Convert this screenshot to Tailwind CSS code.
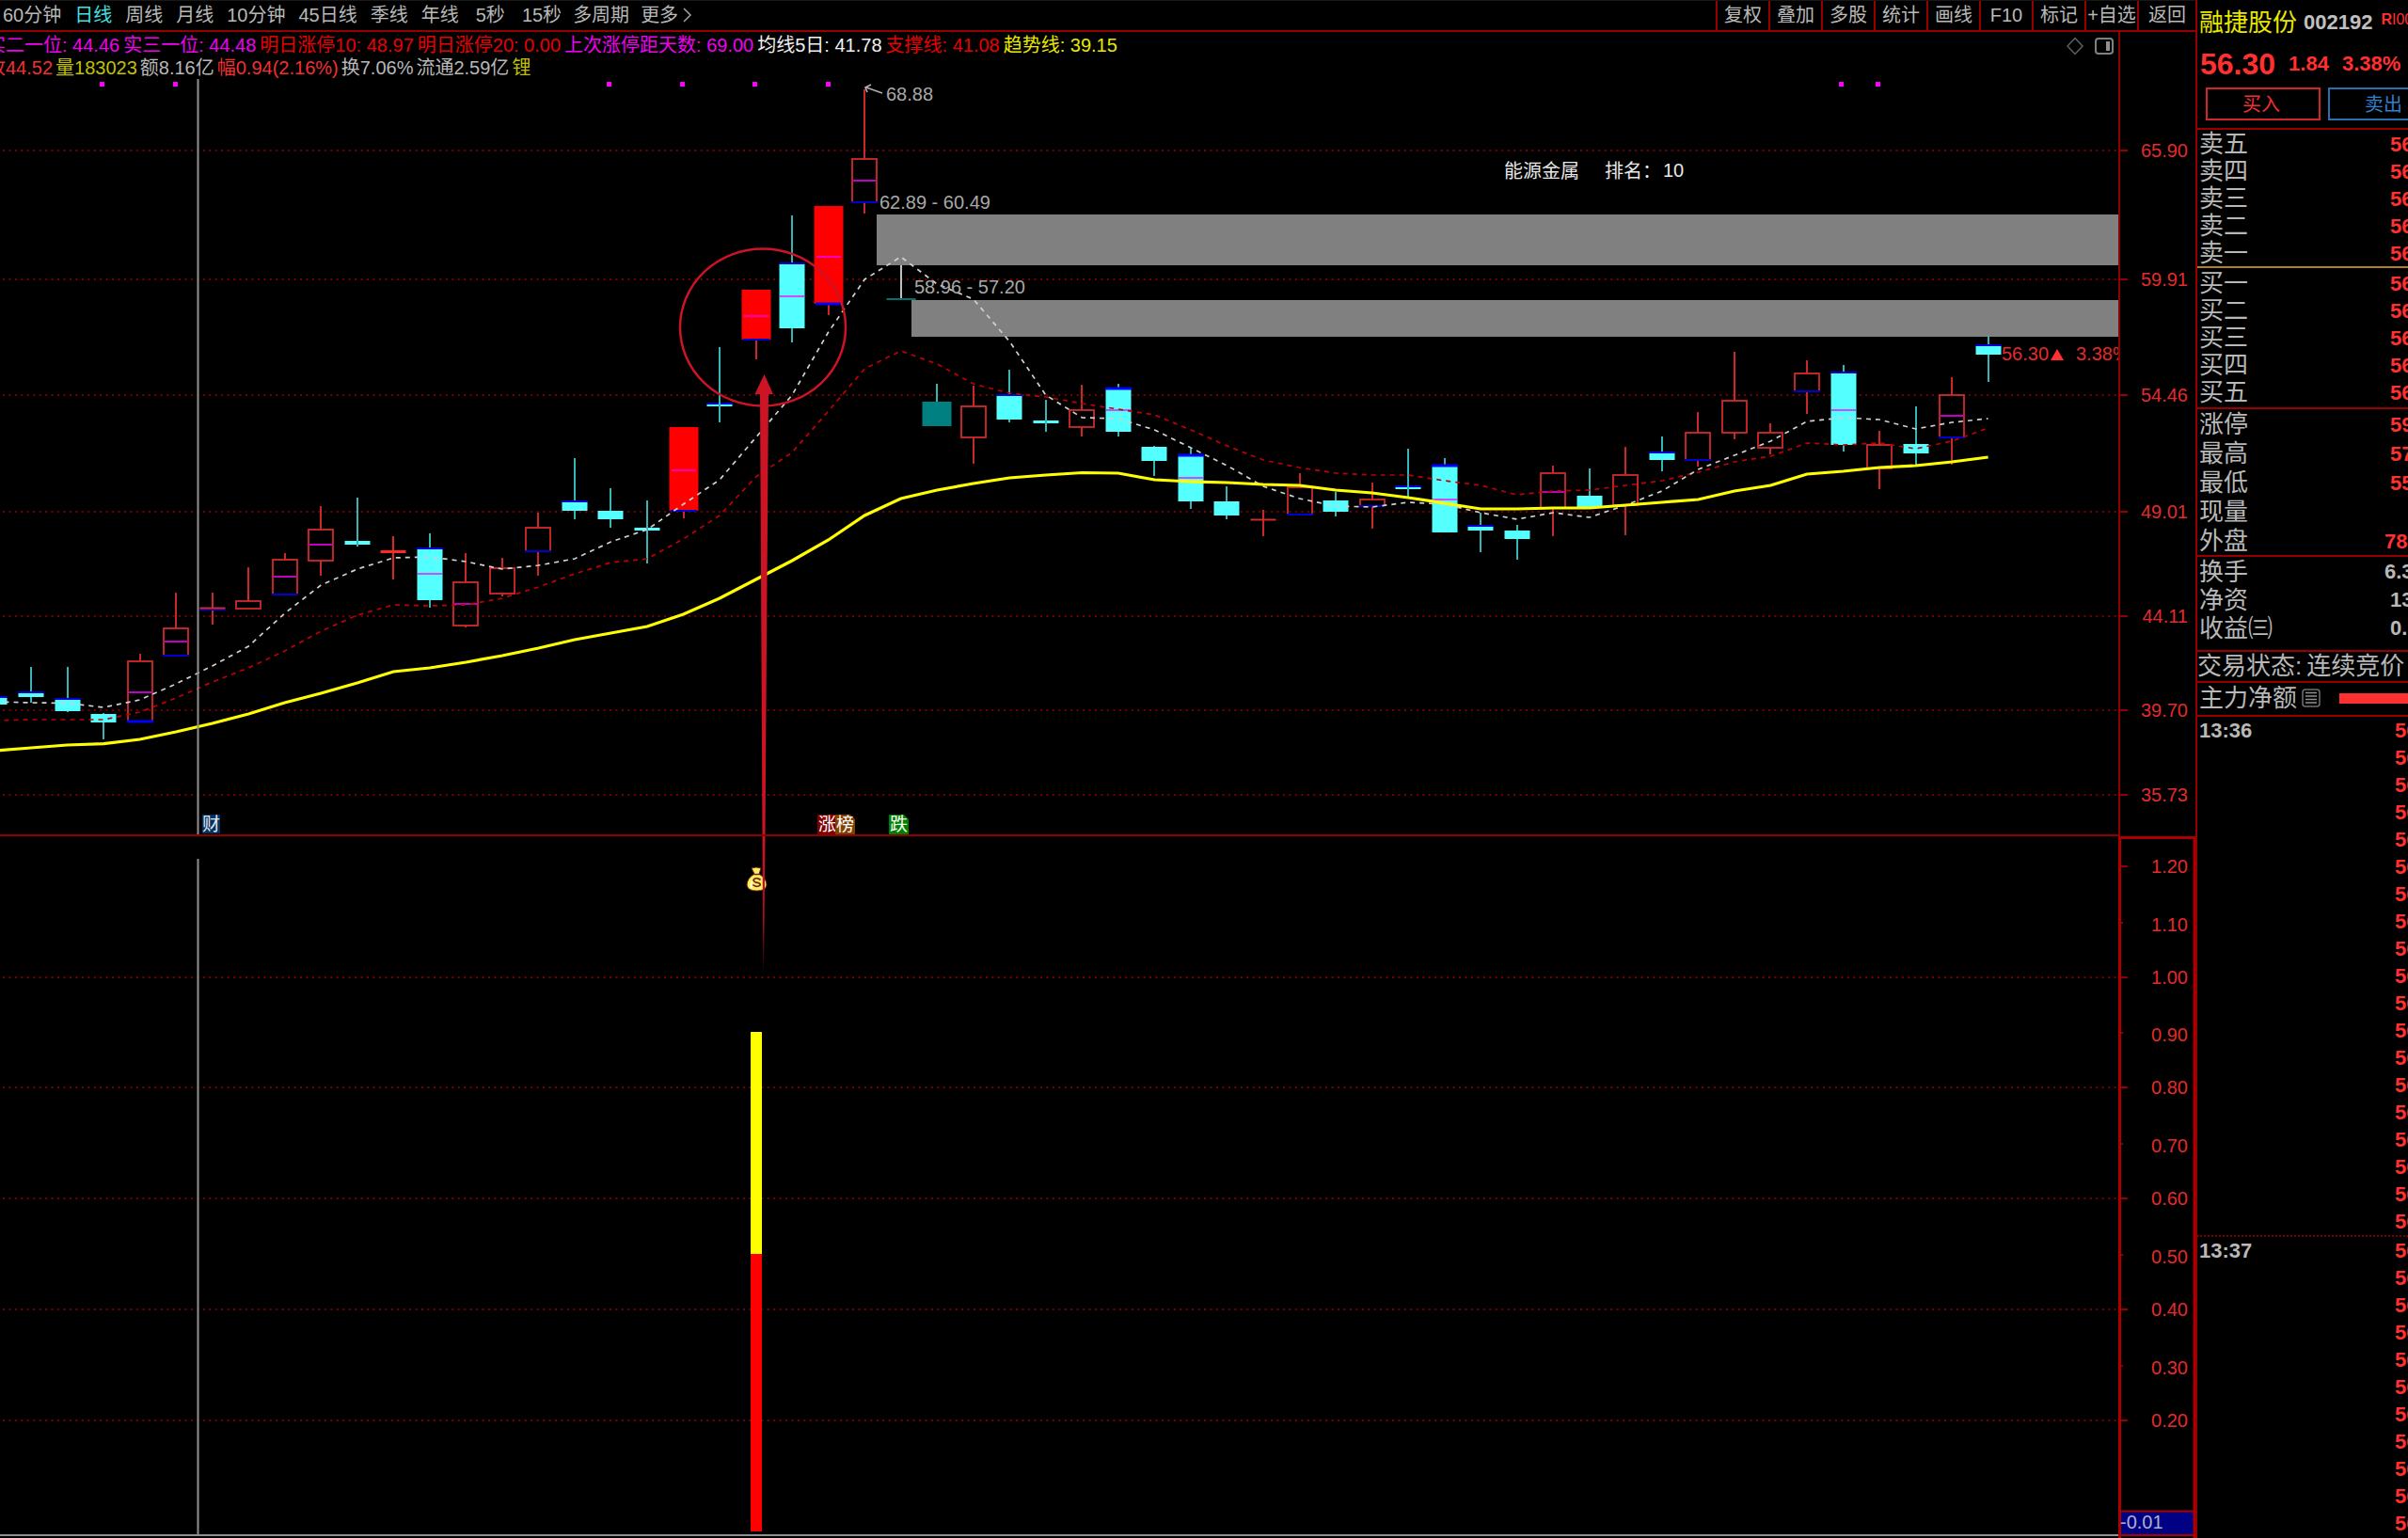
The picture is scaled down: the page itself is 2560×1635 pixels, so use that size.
<!DOCTYPE html>
<html lang="zh-CN">
<head>
<meta charset="utf-8">
<meta name="viewport" content="width=device-width, initial-scale=1">
<title>融捷股份 002192 日线</title>
<script src="https://cdn.jsdelivr.net/npm/@tailwindcss/browser@4"></script>
</head>
<body class="bg-black">
<div class="flex min-h-screen w-full overflow-hidden bg-black font-['Liberation_Sans','Noto_Sans_CJK_SC',sans-serif] text-[20px] leading-6 text-[#b8b8b8] whitespace-nowrap">

  <main class="min-w-0 flex-1">
    <!-- period tabs and tools -->
    <header class="flex h-[34px] items-stretch justify-between border-t border-[#181818] border-b-2 border-b-[#960000]">
      <nav class="flex items-center gap-[14px] pb-[2px] pl-[3px]">
        <a href="#">60分钟</a>
        <a href="#" class="text-[#40e0e0]">日线</a>
        <a href="#">周线</a>
        <a href="#">月线</a>
        <a href="#">10分钟</a>
        <a href="#">45日线</a>
        <a href="#">季线</a>
        <a href="#">年线</a>
        <a href="#" class="px-1">5秒</a>
        <a href="#">15秒</a>
        <a href="#" class="-ml-[2px]">多周期</a>
        <a href="#" class="-ml-[2px] flex items-center gap-1">更多
          <svg width="12" height="18" viewBox="0 0 12 18" fill="none" stroke="#a0a0a0" stroke-width="1.5"><path d="M2 2 L9 9 L2 16"/></svg>
        </a>
      </nav>
      <div class="grid w-[510px] shrink-0 grid-cols-[repeat(8,56px)_1fr] [&>button]:border-l-2 [&>button]:border-[#960000] [&>button]:pb-[2px]">
        <button>复权</button><button>叠加</button><button>多股</button><button>统计</button><button>画线</button><button>F10</button><button>标记</button><button>+自选</button><button>返回</button>
      </div>
    </header>

    <!-- indicator read-outs -->
    <section class="flex h-[50px]">
      <div class="min-w-0 flex-1 overflow-hidden">
        <div class="-ml-[14px] flex h-[27px] items-center gap-1 text-[#f000f0]">
          <span>实二一位: 44.46</span>
          <span>实三一位: 44.48</span>
          <span class="text-[#e80000]">明日涨停10: 48.97</span>
          <span class="text-[#e80000]">明日涨停20: 0.00</span>
          <span>上次涨停距天数: 69.00</span>
          <span class="text-[#f0f0f0]">均线5日: 41.78</span>
          <span class="text-[#e80000]">支撑线: 41.08</span>
          <span class="text-[#e8e800]">趋势线: 39.15</span>
        </div>
        <div class="-ml-[14px] flex h-[21px] items-center gap-[3px]">
          <span class="text-[#f03030]">收44.52</span>
          <span class="text-[#c0c000]">量183023</span>
          <span>额8.16亿</span>
          <span class="text-[#f03030]">幅0.94(2.16%)</span>
          <span>换7.06%</span>
          <span>流通2.59亿</span>
          <span class="text-[#c0c000]">锂</span>
        </div>
      </div>
      <div class="flex h-[30px] items-center gap-3 pr-[5px]">
        <button aria-label="标记点"><svg class="block" width="18" height="20" viewBox="0 0 18 20" fill="none" stroke="#606060" stroke-width="1.5"><path d="M9 1.5 L17 10 L9 18.5 L1 10 Z"/></svg></button>
        <button aria-label="侧栏"><svg class="block" width="20" height="18" viewBox="0 0 20 18"><rect x="1" y="1" width="18" height="16" rx="3" fill="none" stroke="#808080" stroke-width="2"/><rect x="12" y="4" width="4" height="10" fill="#909090"/></svg></button>
      </div>
      <div class="w-[82px] border-l-2 border-[#8f0000]"></div>
    </section>

    <!-- price chart -->
    <svg id="price" class="block w-full" viewBox="0 84 2334 805" font-size="20">
      <defs>
        <clipPath id="plot"><rect x="0" y="84" width="2252" height="805"/></clipPath>
      </defs>
      <g id="grid1"></g>
      <g fill="#808080"><rect x="932" y="228" width="1320" height="54"/><rect x="969" y="319" width="1283" height="39"/></g>
      <g id="candles" clip-path="url(#plot)"></g>
      <g id="lines" fill="none"></g>
      <path d="M210.5 84V888" stroke="#909090" stroke-width="2"/>
      <g id="dots" fill="#ff00ff"></g>
      <g fill="none" stroke="#b0b0b0" stroke-width="1.6"><path d="M938 99 L921 93 M926 90 L920 93 L922 98"/></g>
      <g fill="#a8a8a8">
        <text x="942" y="107">68.88</text>
        <text x="935" y="222">62.89 - 60.49</text>
        <text x="972" y="312">58.96 - 57.20</text>
      </g>
      <g fill="#e8e8e8"><text x="1599" y="189">能源金属</text><text x="1706" y="189">排名<tspan font-family="Noto Sans CJK TC, sans-serif">：</tspan></text><text x="1768" y="188">10</text></g>
      <g fill="#e02c2c" clip-path="url(#plot)"><text x="2128" y="383">56.30</text><path d="M2180 383 L2187 371 L2194 383 Z" fill="#ff3030"/><text x="2207" y="383">3.38%</text></g>
      <g>
        <rect x="215" y="866" width="19" height="20" fill="#003264"/><text x="215" y="883" font-size="19" fill="#e8e8e8">财</text>
        <rect x="869" y="866" width="20" height="21" fill="#800000"/><text x="870" y="883" font-size="19" fill="#fff">涨</text>
        <path d="M888 866h16l5 5v16h-21z" fill="#804000"/><text x="889" y="883" font-size="19" fill="#fff">榜</text>
        <path d="M945 866h16l5 5v16h-21z" fill="#008000"/><text x="946" y="883" font-size="19" fill="#fff">跌</text>
      </g>
      <ellipse cx="811" cy="348" rx="88" ry="83.5" fill="none" stroke="#cc1426" stroke-width="2.5"/>
      <path d="M812.5 398 L822 419 H817 L813.5 889 H810.5 L808 419 H802.5 Z" fill="#cc1424"/>
      <path d="M2253 84V889" stroke="#8f0000" stroke-width="2"/>
      <path d="M0 888H2252" stroke="#8f0000" stroke-width="2"/>
    </svg>

    <!-- signal indicator -->
    <svg id="signal" class="block w-full" viewBox="0 889 2334 746" font-size="20">
      <defs><linearGradient id="fade" x1="0" y1="889" x2="0" y2="1038" gradientUnits="userSpaceOnUse"><stop offset="0" stop-color="#cc1424"/><stop offset=".6" stop-color="#a81020"/><stop offset="1" stop-color="#cc1424" stop-opacity="0"/></linearGradient></defs>
      <g id="grid2"></g>
      <path d="M210.5 913V1632" stroke="#909090" stroke-width="2"/>
      <rect x="798" y="1097" width="12" height="236" fill="#ffff00"/>
      <rect x="798" y="1333" width="12" height="295" fill="#ff0000"/>
      <g>
        <path d="M799 923 Q804 921 809 923 L807 929 Q815 934 815 941 Q814 947 804.500 947 Q795 947 794 941 Q794 934 802 929 Z" fill="#ffee60" stroke="#70281c" stroke-width="1"/>
        <path d="M800 937 Q797 940 799 944" stroke="#fff" stroke-width="1.500" fill="none"/>
        <path d="M801 929.500H808" stroke="#70281c" stroke-width="1.500"/>
        <path d="M808.500 935.500 Q806 933 802.500 934 Q799.500 936 803 937.800 L806.500 938.600 Q810 940.500 806.500 942 Q802.500 943 800.500 940.500" fill="none" stroke="#70281c" stroke-width="1.800"/>
      </g>
      <path d="M810.500 889H813.500L812 1038H811.300Z" fill="url(#fade)"/>
      <path d="M0 1632H2252" stroke="#909090" stroke-width="2"/>
      <rect x="2255" y="1607" width="77" height="25" fill="#000084"/>
      <path d="M2253.500 1635V890.500H2333V1635" fill="none" stroke="#ac0000" stroke-width="3"/>
      <path d="M2253 1606.500H2333M2253 1632H2333" stroke="#ac0000" stroke-width="2"/>
      <text x="2254" y="1625" fill="#b0b0c8">-0.01</text>
    </svg>
  </main>

  <!-- quote panel -->
  <aside class="w-[226px] shrink-0 overflow-hidden border-l-2 border-[#960000] text-[26px] [&_b]:text-[22px] [&_b]:text-[#ff3030]">
    <div class="h-[138px] border-b-2 border-[#960000]">
      <div class="flex h-12 items-center pl-[2px]">
        <span class="text-[#e8e800]">融捷股份</span>
        <span class="ml-[7px] text-[22px] font-bold text-[#c0c0c0]">002192</span>
        <span class="ml-[9px] -mt-[6px] text-[16px] text-[#ff3030]"><span class="font-bold">R</span>I00</span>
      </div>
      <div class="flex h-10 items-center gap-[14px] pl-[3px] font-bold text-[#ff3030]">
        <span class="text-[32px]">56.30</span><span class="text-[22px]">1.84</span><span class="text-[22px]">3.38%</span>
      </div>
      <div class="mt-[5px] flex gap-2 pl-[9px] text-[20px]">
        <button class="h-[35px] w-[122px] shrink-0 border-2 border-[#d02828] pr-1 text-[#f03030]">买入</button>
        <button class="h-[35px] w-[122px] shrink-0 border-2 border-[#2870b0] pr-1 text-[#3080d0]">卖出</button>
      </div>
    </div>
    <dl class="border-b-2 border-[#b08020] [&>div]:flex [&>div]:h-[29px] [&>div]:items-center [&>div]:justify-between [&>div]:pl-[2px] [&_dd]:w-[19px]">
      <div><dt>卖五</dt><dd><b>56</b></dd></div>
      <div><dt>卖四</dt><dd><b>56</b></dd></div>
      <div><dt>卖三</dt><dd><b>56</b></dd></div>
      <div><dt>卖二</dt><dd><b>56</b></dd></div>
      <div><dt>卖一</dt><dd><b>56</b></dd></div>
    </dl>
    <dl class="border-b-2 border-[#960000] pt-px pb-[2px] [&>div]:flex [&>div]:h-[29px] [&>div]:items-center [&>div]:justify-between [&>div]:pl-[2px] [&_dd]:w-[19px]">
      <div><dt>买一</dt><dd><b>56</b></dd></div>
      <div><dt>买二</dt><dd><b>56</b></dd></div>
      <div><dt>买三</dt><dd><b>56</b></dd></div>
      <div><dt>买四</dt><dd><b>56</b></dd></div>
      <div><dt>买五</dt><dd><b>56</b></dd></div>
    </dl>
    <dl class="border-b-2 border-[#960000] [&>div]:flex [&>div]:h-[31px] [&>div]:items-center [&>div]:justify-between [&>div]:pl-[2px]">
      <div><dt>涨停</dt><dd class="w-[19px]"><b>59</b></dd></div>
      <div><dt>最高</dt><dd class="w-[19px]"><b>57</b></dd></div>
      <div><dt>最低</dt><dd class="w-[19px]"><b>55</b></dd></div>
      <div><dt>现量</dt><dd></dd></div>
      <div><dt>外盘</dt><dd class="w-[25px]"><b>78</b></dd></div>
    </dl>
    <dl class="border-b-2 border-[#960000] pt-px pb-2 [&>div]:flex [&>div]:h-[30px] [&>div]:items-center [&>div]:justify-between [&>div]:pl-[2px] [&_dd]:text-[22px] [&_dd]:font-bold">
      <div><dt>换手</dt><dd class="w-[25px]">6.3</dd></div>
      <div><dt>净资</dt><dd class="w-[19px]">13</dd></div>
      <div><dt>收益㈢</dt><dd class="w-[19px]">0.</dd></div>
    </dl>
    <p class="flex h-[33px] items-center gap-[5px] border-b-2 border-[#960000] pb-[2px]"><span>交易状态:</span><span>连续竞价</span></p>
    <div class="flex h-9 items-center border-b-2 border-[#960000] pb-[2px] pl-[2px]">
      <span>主力净额</span>
      <svg class="ml-[5px] shrink-0" width="20" height="20" viewBox="0 0 20 20" fill="none" stroke="#909090"><rect x="1" y="1" width="18" height="18" rx="3" stroke-width="1.500" stroke="#707070"/><path d="M4 4.500H16M4 8H16M4 11.500H16M4 15H16" stroke-width="1.500"/></svg>
      <span class="ml-[20px] h-[11px] flex-1 bg-[#ff3030]"></span>
    </div>
    <ol id="ticks" class="overflow-hidden"></ol>
  </aside>
</div>

<script>
const X0 = 33, STEP = 38.53, cx = i => X0 + STEP * i;

// [kind, high, top, bottom, low, magenta mid line, blue edge thickness], first bar is index -1
// r hollow rise, c fall, R limit-up block, T suspended gap block, W gap wick
const bars = [
['c',741,741,749,749,0,2],['c',709,736,741,747,0,2],['c',709,743,756,757,0,2],['c',758,759,768,786],
['r',695,703,767,767,736,4],['r',630,668,697,697,682,2],['r',630,647,648,664,0,2],['r',603,639,647,647],
['r',588,595,632,632,613,2],['r',538,563,596,612,579],['c',529,575,579,581],['F',570,585,588,616],
['c',567,583,638,646,610,2],['r',588,619,665,667,642],['r',593,604,631,634],['r',545,561,586,612,0,2],
['c',487,533,543,552,0,2],['c',519,543,552,561],['c',532,561,564,599],['R',454,454,543,551,500,2],
['c',369,429,432,449,0,2],['R',308,308,361,382,336,2],['c',229,280,349,364,315,2],['R',219,219,323,335,273,4],
['r',95,169,215,227,192,2],['W',282,317,319,318],['T',408,427,453,453],['r',410,432,465,493],
['c',393,420,446,449,0,2],['c',425,447,450,459],['r',409,436,454,464],['c',408,413,459,464,436,4],
['c',474,475,490,506],['c',477,484,533,541,508,4],['c',517,533,548,552],['r',542,552,552,570],
['r',503,518,547,547,0,2],['c',523,532,544,549],['r',513,531,538,562,0,2],['c',477,517,520,528,0,2],
['c',487,495,566,566,531,4],['c',545,559,564,587,0,2],['c',558,564,573,595],['r',495,503,540,570,523],
['c',498,527,540,540],['r',475,505,537,569],['c',464,481,489,501,0,2],['r',438,460,489,496,0,2],
['r',374,426,460,467],['r',450,460,476,483],['r',383,397,416,440,0,2],['c',388,396,473,480,436,2],
['r',458,473,498,520],['c',432,472,482,495],['r',401,420,465,494,442,2],['c',357,367,377,406,0,2]];

let out = '';
bars.forEach(([k, hi, top, bot, lo, mid, blue], n) => {
  const x = Math.round(cx(n - 1)), wide = 'RTW'.includes(k) ? 31 : 27, l = x - wide / 2;
  const wick = {r:'#c82828',R:'#c82828',F:'#d82828',c:'#38b4b4',T:'#38b4b4',W:'#c0c0c0'}[k];
  out += `<path d="M${x} ${hi}V${top}M${x} ${bot}V${Math.max(lo, bot)}" stroke="${wick}" stroke-width="2"/>`;
  if (k === 'W') out += `<path d="M${x} 282V318" stroke="${wick}" stroke-width="2"/><path d="M${l} 318H${l + wide}" stroke="#007070" stroke-width="2"/>`;
  else if (k === 'r') out += `<rect x="${l + .5}" y="${top}" width="${wide - 1}" height="${bot - top || 1}" fill="none" stroke="#d02a2a" stroke-width="${bot - top ? 1.8 : 1}"/>`;
  else out += `<rect x="${l}" y="${top}" width="${wide}" height="${bot - top}" fill="${{R:'#ff0000',F:'#ff2828',c:'#54ffff',T:'#008080'}[k]}"/>`;
  if (mid) out += `<path d="M${x - 13} ${mid}H${x + 13}" stroke="${k === 'c' ? '#cc4cff' : k === 'R' ? '#ff00c0' : '#c000c0'}" stroke-width="2"/>`;
  if (blue) { const y = k === 'c' ? top : bot; out += `<path d="M${x - 14} ${y}H${x + 14}" stroke="${blue > 2 ? '#0000ff' : '#0000d0'}" stroke-width="${blue > 2 ? 3 : 2}"/>`; }
  if (k === 'c' && bot - top < 5) out += `<path d="M${x} ${hi}V${lo}" stroke="#38b4b4" stroke-width="2"/>`;
  if (n === 6) out += `<path d="M${x - 13} 646.5H${x + 13}" stroke="#d02a2a" stroke-width="2"/>`;
});
document.getElementById('candles').innerHTML = out;

const trend = [798,795,792,790.7,786,778,769,759,747,737,726,714,710,704,697,689,680,673,666,653,636,616,596,574,548,530,521,514,508,505,502.5,503,510,512,513,515,516,521,524,529,535,541,541,540,540,537,534,531,522,516,504,501,497,495,491,486];
const ma5 = [746,747,747.5,752,744,727,708,687,652,622,605,593,592,597,605,601,594,576,563,536,510,465,420,353,297,273,302,318,363,420,444,445,457,476,495,517,530,538,539,534,536,545,552,545,550,537,522,499,484,469,448,444,446,456,449,445];
const support = [766,765,765,765,757,742,725,710,692,671,654,643,644,643,636,624,610,598,594,573,548,507,481,437,392,373,387,408,418,422,429,435,441,457,474,489,497,503,505,505,511,516,526,522,521,516,511,502,491,485,471,473,471,477,469,455];
const pts = a => a.map((y, n) => cx(n - 1).toFixed(1) + ',' + y).join(' ');
document.getElementById('lines').innerHTML =
  `<polyline points="${pts(support)}" stroke="#c00000" stroke-width="1.7" stroke-dasharray="5 5"/>` +
  `<polyline points="${pts(ma5)}" stroke="#d0d0d0" stroke-width="1.7" stroke-dasharray="5 5"/>` +
  `<polyline points="${pts(trend)}" stroke="#ffff00" stroke-width="3.2"/>`;

document.getElementById('dots').innerHTML = [108,186,647,725,802,880,1957,1996].map(x => `<rect x="${x - 2}" y="87" width="5" height="5"/>`).join('');

const level = ([y, t, full]) =>
  (full ? `<path d="M3 ${y}H2252" stroke="#780000" stroke-width="1.800" stroke-dasharray="2 4.450"/>` : '') +
  `<path d="M2253 ${y}H${full === 0 ? 2257 : 2262}" stroke="#960000" stroke-width="2"/>` +
  `<text x="2326" y="${y + (full === 0 ? 9 : 7)}" text-anchor="end" fill="#e02c2c">${t}</text>`;
document.getElementById('grid1').innerHTML = [[160,'65.90',1],[297,'59.91',1],[420,'54.46',1],[544,'49.01',1],[655,'44.11',1],[755,'39.70',1],[845,'35.73',1]].map(level).join('');
document.getElementById('grid2').innerHTML = [[921,'1.20'],[981,'1.10',0],[1039,'1.00',1],[1098,'0.90',0],[1156,'0.80',1],[1216,'0.70',0],[1274,'0.60',1],[1334,'0.50',0],[1392,'0.40',1],[1452,'0.30',0],[1510,'0.20',1]].map(level).join('');

document.getElementById('ticks').innerHTML = Array.from({length: 30}, (_, i) =>
  `<li class="flex h-[29px] items-center justify-between pl-[2px] text-[22px] font-bold"><span>${i === 0 ? '13:36' : i === 19 ? '13:37' : ''}</span><b class="w-[14px]">56</b></li>` +
  (i === 18 ? '<li class="border-t-2 border-dotted border-[#780000]"></li>' : '')).join('');
</script>
</body>
</html>
